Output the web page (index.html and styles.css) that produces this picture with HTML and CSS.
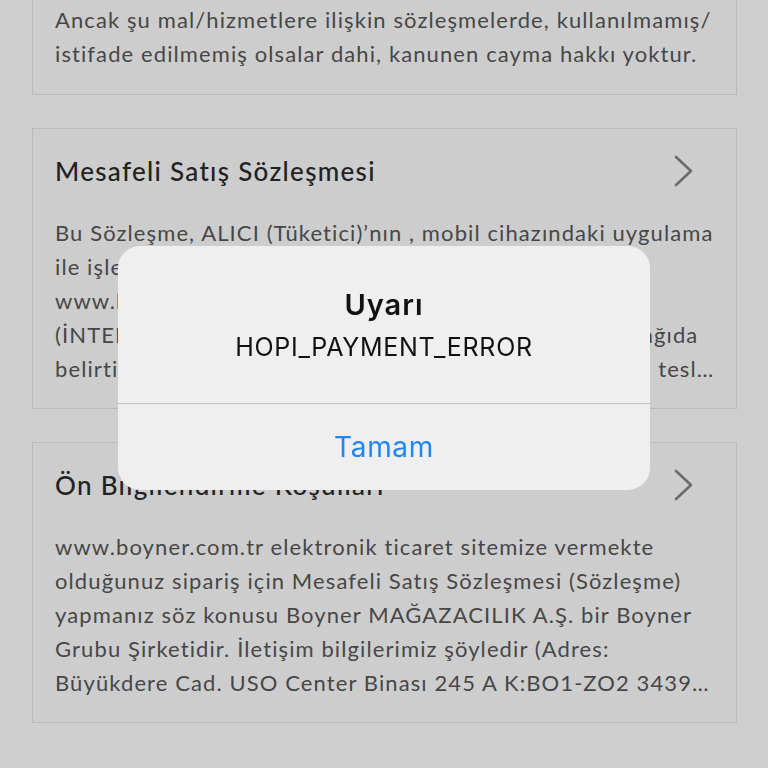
FILE: index.html
```html
<!DOCTYPE html>
<html lang="tr">
<head>
<meta charset="utf-8">
<title>Sözleşmeler</title>
<link rel="stylesheet" href="styles.css">
</head>
<body>
<main class="list">
  <section class="card card-first">
    <p class="card-text">Ancak şu mal/hizmetlere ilişkin sözleşmelerde, kullanılmamış/<br>istifade edilmemiş olsalar dahi, kanunen cayma hakkı yoktur.</p>
  </section>
  <section class="card">
    <div class="card-head">
      <h2 class="card-title">Mesafeli Satış Sözleşmesi</h2>
      <svg class="chevron" width="22" height="32" viewBox="0 0 22 32"><path d="M3 2 L18 16 L3 30" fill="none" stroke="#6b6b6b" stroke-width="2.6" stroke-linecap="round" stroke-linejoin="round"/></svg>
    </div>
    <p class="card-text">Bu Sözleşme, ALICI (Tüketici)’nın , mobil cihazındaki uygulama<br>ile işlem yaparak SATICI’ya ait mobil uygulama ve<br>www.boyner.com.tr alan adlı internet sitesinden<br>(İNTERNET SİTESİ) satın aldığı, niteliği ve satış fiyatı aşağıda<br><span class="last-line">belirtilen ürün/ürünlerin satışı ve bedelinin ödenmesi ve teslimi ile ilgili olarak tarafların hak ve yükümlülüklerini düzenler.</span></p>
  </section>
  <section class="card">
    <div class="card-head">
      <h2 class="card-title">Ön Bilgilendirme Koşulları</h2>
      <svg class="chevron" width="22" height="32" viewBox="0 0 22 32"><path d="M3 2 L18 16 L3 30" fill="none" stroke="#6b6b6b" stroke-width="2.6" stroke-linecap="round" stroke-linejoin="round"/></svg>
    </div>
    <p class="card-text">www.boyner.com.tr elektronik ticaret sitemize vermekte<br>olduğunuz sipariş için Mesafeli Satış Sözleşmesi (Sözleşme)<br>yapmanız söz konusu Boyner MAĞAZACILIK A.Ş. bir Boyner<br>Grubu Şirketidir. İletişim bilgilerimiz şöyledir (Adres:<br><span class="last-line">Büyükdere Cad. USO Center Binası 245 A K:BO1-ZO2 34394 Maslak Sarıyer İstanbul).</span></p>
  </section>
</main>

<div class="overlay">
  <div class="alert" role="alertdialog">
    <div class="alert-body">
      <h1 class="alert-title">Uyarı</h1>
      <p class="alert-msg">HOPI_PAYMENT_ERROR</p>
    </div>
    <button class="alert-btn">Tamam</button>
  </div>
</div>
</body>
</html>
```
FILE: styles.css
```css
* { box-sizing: border-box; }
html, body {
  margin: 0;
  height: 100%;
  overflow: hidden;
  background: #cecece;
}
body {
  font-family: Lato, "Open Sans", sans-serif;
}
.list {
  display: flex;
  flex-direction: column;
  gap: 33px;
  margin: -40px 31px 0 32px;
}
.card {
  border: 1px solid #b9b9b9;
  background: #cdcdcd;
  padding: 25px 22px 22px 22px;
}
.card-first {
  padding-top: 42px;
  padding-bottom: 23px;
}
.card-head {
  display: flex;
  align-items: center;
  justify-content: space-between;
  height: 34px;
  margin-bottom: 28px;
  padding-right: 19px;
}
.card-title {
  margin: 0;
  font-size: 26px;
  font-weight: 500;
  color: #222;
  letter-spacing: 1.3px;
  white-space: nowrap;
}
.chevron { display: block; flex-shrink: 0; }
.card-text {
  margin: 0;
  font-size: 22px;
  line-height: 34px;
  color: #474747;
  letter-spacing: 1.1px;
  white-space: nowrap;
}
.last-line {
  display: block;
  overflow: hidden;
  text-overflow: ellipsis;
  white-space: nowrap;
}
.overlay {
  position: fixed;
  inset: 0;
  display: flex;
  align-items: center;
  justify-content: center;
  padding-bottom: 32px;
}
.alert {
  width: 532px;
  background: #efefef;
  border-radius: 22px;
  overflow: hidden;
  font-family: Inter, Roboto, sans-serif;
  text-align: center;
}
.alert-body {
  padding: 42px 20px 41px;
  border-bottom: 1px solid #c4c4c4;
}
.alert-title {
  margin: 0;
  font-size: 29px;
  line-height: 34px;
  font-weight: 600;
  color: #111;
  letter-spacing: 1px;
}
.alert-msg {
  margin: 10px 0 0;
  font-size: 25px;
  line-height: 30px;
  color: #111;
  letter-spacing: 0.7px;
}
.alert-btn {
  display: block;
  width: 100%;
  height: 86px;
  border: 0;
  background: transparent;
  font-family: inherit;
  font-size: 28px;
  color: #1f86f4;
  padding: 0;
  letter-spacing: 0.7px;
}
```
